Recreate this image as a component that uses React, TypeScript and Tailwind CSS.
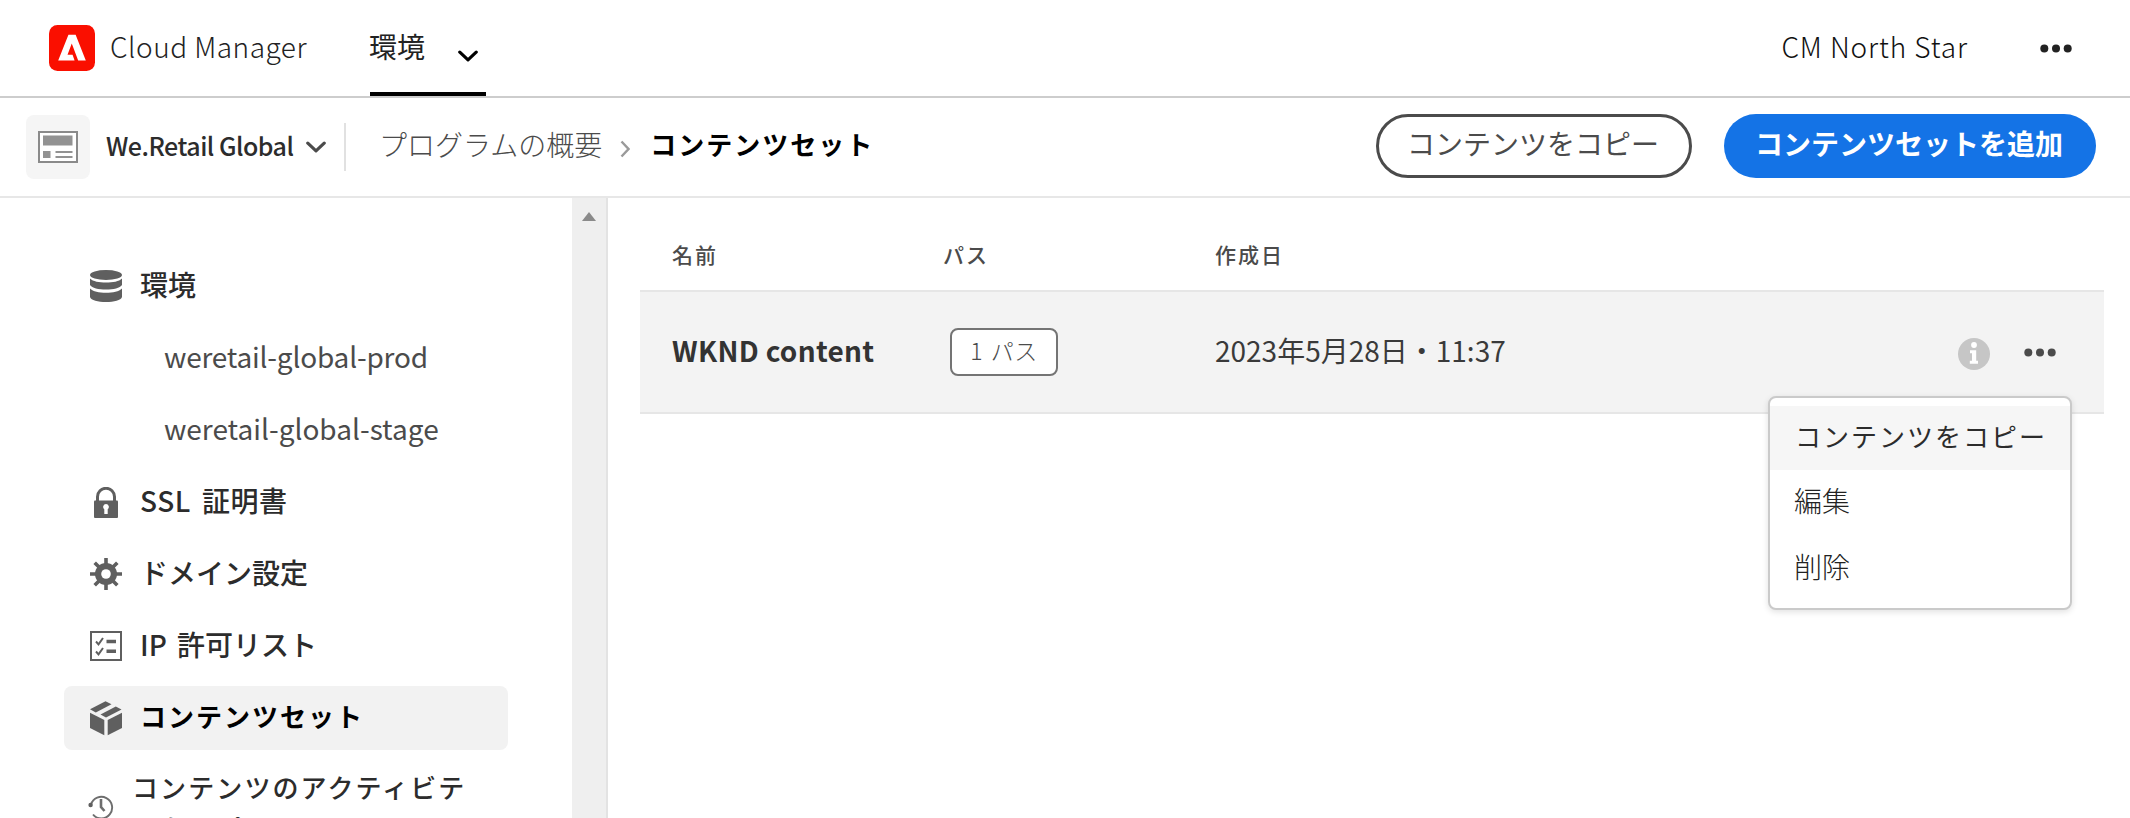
import React from "react";

type IconProps = { className?: string };

const ChevronDown = ({ className = "" }: IconProps) => (
  <svg viewBox="0 0 20 12" className={`h-3 w-5 ${className}`} fill="none" stroke="currentColor" strokeWidth="3.2" strokeLinecap="round" strokeLinejoin="round">
    <path d="M1.8 2.2 10 9.8 18.2 2.2" />
  </svg>
);

const AdobeLogo = () => (
  <svg viewBox="0 0 46 46" className="h-[46px] w-[46px]">
    <rect width="46" height="46" rx="8.5" fill="#fa0f00" />
    <path transform="translate(9.2 9.4) scale(1.15 1.21)" fill="#fff" d="M14.2353 21.6209 12.4925 16.7699H8.11657L11.7945 7.51237 17.3741 21.6209H24L15.1548.379H8.90929L0 21.6209Z" />
  </svg>
);

const ProgramIcon = () => (
  <svg viewBox="0 0 40 32" className="h-8 w-10">
    <rect x="1" y="1" width="38" height="30" fill="#fff" stroke="#8a8a8a" strokeWidth="2" />
    <rect x="5" y="4.5" width="29.500" height="10" fill="#929292" />
    <rect x="5" y="20" width="7.500" height="7" fill="#929292" />
    <rect x="17.500" y="20" width="17" height="2" fill="#929292" />
    <rect x="17.500" y="25" width="17" height="2" fill="#929292" />
  </svg>
);

const DatabaseIcon = () => (
  <svg viewBox="0 0 32 32" className="h-8 w-8" fill="#5f5f5f">
    <ellipse cx="16" cy="5" rx="16" ry="5" />
    <path d="M0 8.500c3 3 9 4 16 4s13-1 16-4V15c-2 3-8.500 4.600-16 4.600S2 18 0 15Z" />
    <path d="M0 18.500c3 3 9 4.200 16 4.200s13-1.200 16-4.200V27c-1 3.200-8 5-16 5S1 30.200 0 27Z" />
  </svg>
);

const LockIcon = () => (
  <svg viewBox="0 0 32 32" className="mt-0.5 h-8 w-8">
    <path d="M7.500 15v-5.200a8.500 8.500 0 0 1 17 0V15" fill="none" stroke="#5f5f5f" strokeWidth="3" />
    <rect x="4" y="13.500" width="24" height="17.500" rx="1" fill="#5f5f5f" />
    <path d="M16 17a2.900 2.900 0 0 1 1.700 5.200V27h-3.400v-4.800A2.900 2.900 0 0 1 16 17Z" fill="#fff" />
  </svg>
);

const GearIcon = () => (
  <svg viewBox="0 0 32 32" className="h-8 w-8">
    <g stroke="#5f5f5f" strokeWidth="3.600">
      <path d="M16 0v32M0 16h32M4.700 4.700l22.600 22.600M27.300 4.700 4.700 27.300" />
    </g>
    <circle cx="16" cy="16" r="11" fill="#5f5f5f" />
    <circle cx="16" cy="16" r="4.800" fill="#fff" />
  </svg>
);

const ListIcon = () => (
  <svg viewBox="0 0 32 32" className="h-8 w-8" fill="none" stroke="#5f5f5f">
    <rect x="1" y="2" width="30" height="28" strokeWidth="2" />
    <path d="M6 11.500l2.500 2.800L13 8M6 21.500l2.500 2.800L13 18" strokeWidth="2" />
    <path d="M16.500 11.500h9.500M16.500 21.300h9.500" strokeWidth="3.600" />
  </svg>
);

const BoxIcon = () => (
  <svg viewBox="0 0 32 36" className="h-9 w-8" fill="#5f5f5f">
    <path d="M0 9.300 15.500 1.200 21.500 4.200 5.800 12.400Z" />
    <path d="M10.500 14.600 25.800 6.500 31.500 9.400 16 17.500Z" />
    <path d="M0 12.800 14.300 20V35.200L0 28Z" />
    <path d="M32 12.800 17.700 20V35.200L32 28Z" />
  </svg>
);

const HistoryIcon = () => (
  <svg viewBox="0 0 26 26" className="h-[26px] w-[26px]" fill="none" stroke="#6e6e6e" strokeWidth="1.900">
    <path d="M3 10.500A10.800 10.800 0 1 1 5 20.500" />
    <path d="M13 5v8l3.500 4" strokeWidth="2.600" />
    <circle cx="2.600" cy="11" r="2.200" fill="#5f5f5f" stroke="none" />
  </svg>
);

const InfoIcon = () => (
  <svg viewBox="0 0 32 32" className="mt-[3px] h-8 w-8">
    <circle cx="16" cy="16" r="16" fill="#c6c6c6" />
    <circle cx="16" cy="7" r="2.900" fill="#fff" />
    <path d="M12 12.200h6.200v10.600H20v3h-8.200v-3h2.200v-7.600h-2Z" fill="#fff" />
  </svg>
);

const Dots = ({ className = "" }: IconProps) => (
  <svg viewBox="0 0 32 9" className={`h-[9px] w-8 ${className}`} fill="currentColor">
    <circle cx="4.300" cy="4.500" r="4" />
    <circle cx="16" cy="4.500" r="4" />
    <circle cx="27.700" cy="4.500" r="4" />
  </svg>
);

const NavItem = ({ icon, label, selected = false, className = "" }: { icon: React.ReactNode; label: string; selected?: boolean; className?: string }) => (
  <li className={`flex h-16 items-center rounded-lg pl-[26px] ${selected ? "bg-[#f2f2f2] font-bold text-black" : "font-medium text-[#2c2c2c]"}`}>
    {icon}
    <span className={`ml-[18px] pb-1 ${className}`}>{label}</span>
  </li>
);

const NavChild = ({ label, className = "" }: { label: string; className?: string }) => (
  <li className={`flex h-16 items-center pb-1 pl-[100px] text-[#4b4b4b] ${className}`}>{label}</li>
);

export default function App() {
  return (
    <div className="flex h-[818px] w-[2130px] flex-col overflow-hidden bg-white font-['Noto_Sans_CJK_JP',sans-serif] text-[28px] leading-none whitespace-nowrap text-[#4b4b4b]">
      <header className="flex h-[98px] shrink-0 items-start border-b-2 border-[#cdcdcd] pl-[49px]">
        <div className="flex h-24 w-[321px] items-center">
          <AdobeLogo />
          <span className="ml-[15px] pb-1 font-light tracking-[0.5px] text-[#222]">Cloud Manager</span>
        </div>
        <div className="flex h-24 w-[116px] items-center border-b-4 border-black text-black">
          <span className="-ml-px text-[#222]">環境</span>
          <ChevronDown className="mt-[19px] ml-[33px]" />
        </div>
        <div className="ml-auto flex h-24 items-center pr-[58px]">
          <span className="pb-1 font-light tracking-[0.9px] text-[#111]">CM North Star</span>
          <Dots className="ml-[72px] text-[#222]" />
        </div>
      </header>

      <div className="flex h-[100px] shrink-0 items-center border-b-2 border-[#e7e7e7] pr-[34px] pl-[26px]">
        <div className="flex h-16 w-16 items-center justify-center rounded-lg bg-[#f5f5f5]">
          <ProgramIcon />
        </div>
        <span className="ml-4 w-[189px] pb-1 text-[25px] font-medium tracking-[-0.5px] text-[#2c2c2c]">We.Retail Global</span>
        <ChevronDown className="ml-[11px]" />
        <div className="ml-[18px] h-12 w-0.5 bg-[#e1e1e1]" />
        <span className="ml-[33px] pb-1.5 font-light text-[#4b4b4b]">プログラムの概要</span>
        <svg viewBox="0 0 10 18" className="mt-1 ml-[18px] h-[18px] w-2.5" fill="none" stroke="#9a9a9a" strokeWidth="2.400">
          <path d="M1.500 1.500 8.500 9 1.500 16.500" />
        </svg>
        <span className="ml-5 pb-1.5 text-[26px] font-bold tracking-[2px] text-black">コンテンツセット</span>
        <button className="mb-0.5 ml-auto flex h-16 w-[316px] items-center justify-center rounded-full border-[3px] border-[#4b4b4b] pr-0.5 pb-1.5">コンテンツをコピー</button>
        <button className="mb-0.5 ml-8 flex h-16 w-[372px] items-center justify-center rounded-full bg-[#1473e6] pr-0.5 pb-1.5 font-bold text-white">コンテンツセットを追加</button>
      </div>

      <div className="flex min-h-0 flex-1">
        <nav className="w-[572px] shrink-0 overflow-hidden pt-14 pl-16">
          <ul className="flex w-[444px] flex-col gap-2">
            <NavItem icon={<DatabaseIcon />} label="環境" />
            <NavChild label="weretail-global-prod" className="tracking-[-0.2px]" />
            <NavChild label="weretail-global-stage" />
            <NavItem icon={<LockIcon />} label="SSL 証明書" className="tracking-[0.6px] [word-spacing:4px]" />
            <NavItem icon={<GearIcon />} label="ドメイン設定" />
            <NavItem icon={<ListIcon />} label="IP 許可リスト" className="[word-spacing:4px]" />
            <NavItem icon={<BoxIcon />} label="コンテンツセット" selected className="text-[26px] tracking-[2px]" />
            <li className="flex items-center pt-2 pl-6 font-medium text-[#2c2c2c]">
              <HistoryIcon />
              <span className="ml-[18px] text-[26px] leading-[41px] tracking-[2.1px]">
                コンテンツのアクティビテ
                <br />
                ィをコピー
              </span>
            </li>
          </ul>
        </nav>
        <div className="flex w-9 shrink-0 justify-center border-r-2 border-[#e3e3e3] bg-[#efefef] pt-3.5">
          <svg viewBox="0 0 14 9" className="h-[9px] w-3.5" fill="#8a8a8a">
            <path d="M7 0 14 9H0Z" />
          </svg>
        </div>
        <main className="flex-1 pr-[26px] pl-8">
          <div className="flex h-[92px] pt-[46px] pl-8 text-[21px] font-medium tracking-[2px]">
            <span className="w-[271px]">名前</span>
            <span className="w-[272px]">パス</span>
            <span>作成日</span>
          </div>
          <div className="relative flex h-[124px] items-center border-y-2 border-[#e6e6e6] bg-[#f3f3f3] pr-12 pl-8">
            <span className="w-[278px] pb-1 font-bold tracking-[0.3px] text-[#333]">WKND content</span>
            <span className="flex h-12 w-[108px] items-center justify-center rounded-lg border-2 border-[#747474] bg-white pb-1 text-[23px] font-light tracking-[0.5px] [word-spacing:2px]">1 パス</span>
            <span className="ml-[157px] pb-1 text-[#3a3a3a]">2023年5月28日・11:37</span>
            <div className="ml-auto flex items-center">
              <InfoIcon />
              <Dots className="ml-[34px]" />
            </div>
            <ul className="absolute top-[104px] right-[32px] w-[304px] rounded-lg border-2 border-[#cacaca] bg-white py-2 shadow-[0_2px_6px_rgba(0,0,0,0.12)]">
              <li className="flex h-16 items-center bg-[#f6f6f6] pb-1 pl-[25px] text-[26px] tracking-[2px] text-[#2c2c2c]">コンテンツをコピー</li>
              <li className="flex h-16 items-center pb-1 pl-6 font-light text-[#222]">編集</li>
              <li className="flex h-[66px] items-center pb-[3px] pl-6 font-light text-[#222]">削除</li>
            </ul>
          </div>
        </main>
      </div>
    </div>
  );
}
